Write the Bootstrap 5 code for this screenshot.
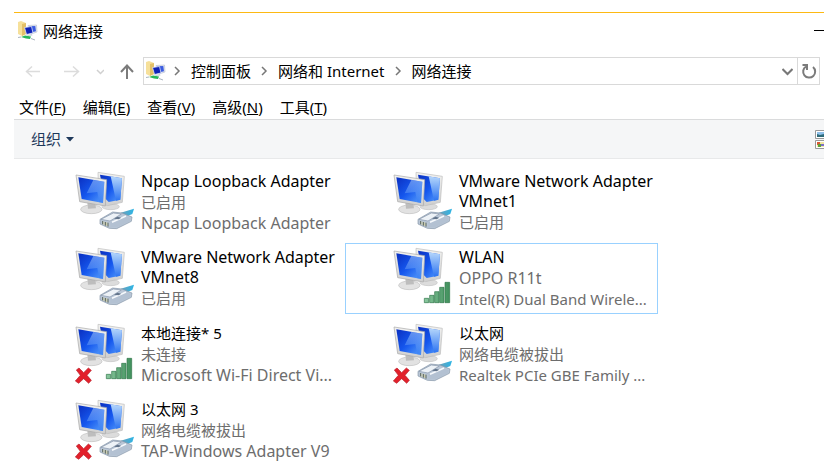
<!DOCTYPE html>
<html lang="zh-CN">
<head>
<meta charset="utf-8">
<meta name="viewport" content="width=device-width, initial-scale=1">
<title>网络连接</title>
<link href="https://cdn.jsdelivr.net/npm/bootstrap@5.3.0/dist/css/bootstrap.min.css" rel="stylesheet">
<style>
body { font-family: "Noto Sans", "Noto Sans CJK SC", sans-serif; font-size: 15px; line-height: 20px; color: #000; background: #fff; overflow: hidden; }
.window { margin: 12px 6px 0 14px; border-top: 1px solid #fdb913; }
.title-bar { height: 36px; padding-left: 4px; gap: 5px; }
.title-bar h1 { font-size: 15px; line-height: 20px; font-weight: 400; }
.plain { border: 0; background: none; padding: 0; color: inherit; line-height: 20px; }
.nav-row { height: 44px; padding: 8px 4px 8px 11px; }
.nav-row .arrows { width: 118px; gap: 16px; }
.address { border: 1px solid #d9d9d9; height: 28px; padding-left: 2px; }
.address .crumbs { gap: 10px; }
.address .crumbs svg, .title-bar svg { overflow: visible; }
.address .refresh { border-left: 1px solid #d9d9d9; width: 22px; }
.menu-row { height: 26px; padding: 4px 5px 2px; gap: 17px; }
.tool-row { height: 40px; background: #f5f6f7; border-top: 1px solid #dadbdc; border-bottom: 1px solid #e8e9ea; padding-left: 17px; color: #1e395b; }
.connections { grid-template-columns: repeat(auto-fill, 313px); column-gap: 5px; row-gap: 5px; padding: 8px 0 0 13px; }
.connection { height: 71px; border: 1px solid transparent; padding: 3px 0 0 47px; gap: 6px; color: #000; }
.connection.selected { border-color: #99d1ff; }
.connection svg { width: 60px; height: 62px; }
.connection .name { line-height: 20px; padding-bottom: 1px; }
.connection .info { line-height: 21px; color: #6d6d6d; }
.connection .latin { font-size: 16px; }
</style>
<script src="https://cdn.jsdelivr.net/npm/bootstrap@5.3.0/dist/js/bootstrap.bundle.min.js"></script>
</head>
<body>
<svg class="position-absolute" width="0" height="0" aria-hidden="true">
  <defs>
    <linearGradient id="screen" x1="0" y1="0" x2="1" y2="1"><stop offset="0" stop-color="#0a2fc0"/><stop offset=".5" stop-color="#1557ee"/><stop offset="1" stop-color="#5aa2fb"/></linearGradient>
    <linearGradient id="glare" x1="0" y1="0" x2="0" y2="1"><stop offset="0" stop-color="#b5d6fb"/><stop offset="1" stop-color="#2c74f2"/></linearGradient>
    <linearGradient id="frame" x1="0" y1="0" x2="0" y2="1"><stop offset="0" stop-color="#f2f2f0"/><stop offset="1" stop-color="#cfcfcf"/></linearGradient>
    <linearGradient id="bar" x1="0" y1="0" x2="1" y2="0"><stop offset="0" stop-color="#8cc9a0"/><stop offset="1" stop-color="#3f8f5b"/></linearGradient>
    <linearGradient id="cable" x1="0" y1="0" x2="1" y2="0"><stop offset="0" stop-color="#6f9fb8"/><stop offset="1" stop-color="#2bb5e6"/></linearGradient>
    <g id="pcs">
      <ellipse cx="122" cy="122" rx="26" ry="9" fill="#dcdcdc" stroke="#c4c4c4" stroke-width="2"/>
      <path d="M84 19 163 31 157 109 112 119 86 106Z" fill="url(#frame)" stroke="#bcbcbc" stroke-width="2"/>
      <path d="M90 26 156 37 151 101 116 108 104 96Z" fill="url(#screen)"/>
      <path d="M122 31 156 37 151 101 138 104Z" fill="url(#glare)"/>
      <ellipse cx="64" cy="130" rx="32" ry="13" fill="#e2e2e2" stroke="#c0c0c0" stroke-width="2"/>
      <path d="M52 108 76 112 78 127 54 128Z" fill="#bdbdbd"/>
      <path d="M18 27 110 41 106 120 29 107Z" fill="url(#frame)" stroke="#a8a8a8" stroke-width="2"/>
      <path d="M25 34 103 47 99 111 35 99Z" fill="url(#screen)"/>
      <path d="M70 42 103 47 99 111 88 109 82 78 50 82Z" fill="url(#glare)" opacity=".5"/>
    </g>
    <g id="plug">
      <path d="M152 140 192 128 187 144 167 152Z" fill="url(#cable)"/>
      <path d="M90 160 128 138 156 141 186 153 184 166 140 188 118 187 90 174Z" fill="#b9c6d6" stroke="#8595a8" stroke-width="2"/>
      <path d="M93 160 130 141 154 144 120 165Z" fill="#edf2f7" stroke="#8796aa" stroke-width="2"/>
      <path d="M121 167 160 149 182 156 181 165 140 184 121 184Z" fill="#b3c1d2"/>
      <path d="M98 165v10M106 168v11M114 170v12" stroke="#5b6659" stroke-width="3"/>
      <path d="M102 167v10M110 169v11" stroke="#d8cf8c" stroke-width="2"/>
      <path d="M126 169 168 150" stroke="#f6f9fc" stroke-width="5"/>
      <path d="M132 158 142 152 154 155 146 160Z" fill="#62748b"/>
    </g>
    <path id="bars" fill="url(#bar)" stroke="#2f7548" stroke-width="2" d="M109 169h13v13h-13zM125 160h13v22h-13zM140 149h13v33h-13zM155 136h13v46h-13zM171 121h14v61h-14z"/>
    <path id="cross" d="M19 156 27 150 41 164 55 150 64 157 51 172 64 187 56 196 41 182 26 196 16 189 31 172Z" fill="#e2202b" stroke="#b8202a" stroke-width="2"/>
    <g id="folder-net">
      <path d="M0 1 3 0 8 2V13L4 15 0 13Z" fill="#f6e09a"/>
      <path d="M4 3 8 2V13L4 15Z" fill="#e3c068"/>
      <path d="M10 4.500 18.500 4 19 11 13 13Z" fill="#e6eaf2" stroke="#b5bccb" stroke-width=".6"/>
      <path d="M11 5.300 17.300 5 18 10.300 13 11.500Z" fill="#3a5be0"/>
      <path d="M6.500 6.500 13.500 5.500 15 12 8.500 13.500Z" fill="#0f22b8" stroke="#dfe6f5" stroke-width=".8"/>
      <path d="M9 14 14 13 14.500 14.500 10 15Z" fill="#c9d0da"/>
      <path d="M3 16 7 14.500 13 15.500 12 18 8 17.500Z" fill="#27b659"/>
      <path d="M13 17.500 17 19M0 16.500 3 16" stroke="#a9b4c0"/>
    </g>
  </defs>
</svg>
<main class="window">
  <header class="title-bar d-flex align-items-center">
    <svg width="20" height="20" viewBox="0 0 20 20" aria-hidden="true"><use href="#folder-net"/></svg>
    <h1 class="m-0 flex-grow-1">网络连接</h1>
    <button class="plain d-flex" aria-label="最小化"><svg width="10" height="10" viewBox="0 0 10 10"><path d="M0 4.500h10" stroke="#000"/></svg></button>
  </header>
  <nav class="nav-row d-flex align-items-center" aria-label="地址栏">
    <div class="arrows d-flex align-items-center flex-shrink-0">
      <button class="plain d-flex" aria-label="后退"><svg width="22" height="18" viewBox="0 0 22 18" fill="none" stroke="#dcdcdc" stroke-width="1.500"><path d="M15 9.500H1M7 4.500 1.500 9.500 7 14.500"/></svg></button>
      <button class="plain d-flex" aria-label="前进"><svg width="17" height="18" viewBox="0 0 17 18" fill="none" stroke="#dcdcdc" stroke-width="1.500"><path d="M1 9.500H15M10 4.500 15.500 9.500 10 14.500"/></svg></button>
      <button class="plain d-flex" aria-label="最近浏览的位置"><svg width="8" height="18" viewBox="0 0 8 18" fill="none" stroke="#d0d0d0" stroke-width="1.500"><path d="M1 8 4.500 11.500 8 8"/></svg></button>
      <button class="plain d-flex" aria-label="上移"><svg width="14" height="18" viewBox="0 0 14 18" fill="none" stroke="#7b7b7b" stroke-width="2"><path d="M7 17V4M1 10 7 3.500 13 10"/></svg></button>
    </div>
    <div class="address d-flex flex-grow-1 align-items-stretch">
      <div class="crumbs d-flex align-items-center flex-grow-1">
        <svg width="18" height="20" viewBox="0 0 18 20" aria-hidden="true"><use href="#folder-net"/></svg>
        <svg width="7" height="10" viewBox="0 0 7 10" fill="none" stroke="#777" stroke-width="1.500" aria-hidden="true"><path d="M1 1 5 5 1 9"/></svg>
        <button class="plain">控制面板</button>
        <svg width="7" height="10" viewBox="0 0 7 10" fill="none" stroke="#777" stroke-width="1.500" aria-hidden="true"><path d="M1 1 5 5 1 9"/></svg>
        <button class="plain">网络和 Internet</button>
        <svg width="7" height="10" viewBox="0 0 7 10" fill="none" stroke="#777" stroke-width="1.500" aria-hidden="true"><path d="M1 1 5 5 1 9"/></svg>
        <button class="plain">网络连接</button>
      </div>
      <button class="plain d-flex align-items-center me-1" aria-label="以前的位置"><svg width="11" height="10" viewBox="0 0 11 10" fill="none" stroke="#777" stroke-width="2"><path d="M.5 3 5.500 8 10.500 3"/></svg></button>
      <button class="plain refresh d-flex align-items-center justify-content-center" aria-label="刷新"><svg width="16" height="16" viewBox="0 0 16 16" fill="none" stroke="#7b7b7b" stroke-width="2"><path d="M12 4A6 6 0 1 1 5 3.500M1.500 2H6v5"/></svg></button>
    </div>
  </nav>
  <nav class="menu-row d-flex align-items-center" aria-label="菜单栏">
    <button class="plain">文件(<u>F</u>)</button>
    <button class="plain">编辑(<u>E</u>)</button>
    <button class="plain">查看(<u>V</u>)</button>
    <button class="plain">高级(<u>N</u>)</button>
    <button class="plain">工具(<u>T</u>)</button>
  </nav>
  <div class="tool-row d-flex align-items-center justify-content-between">
    <button class="plain d-flex align-items-center gap-1">组织<svg width="9" height="5" viewBox="0 0 9 5" aria-hidden="true"><path d="M1 0h8L5 4.500Z" fill="#1e395b"/></svg></button>
    <button class="plain d-flex" aria-label="更改视图"><svg width="9" height="20" viewBox="0 0 9 20"><path d="M10 1.500H.5v8H10M10 11.500H.5v8H10" fill="#fff" stroke="#999"/><path d="M2 3h7v3H2z" fill="#8fc0ea"/><path d="M2 5 5 6 9 5V8H2z" fill="#2f6b78"/><path d="M2 13h7v5H2z" fill="#f0e6a0"/><path d="M2 13h3v3H2z" fill="#d85a35"/><path d="M3 15h3v3H3z" fill="#5ba13c"/><path d="M6 15h3v2H6z" fill="#7b6fc9"/></svg></button>
  </div>
  <section class="connections d-grid" aria-label="网络连接">
    <button class="plain connection d-flex text-start">
      <svg class="flex-shrink-0" viewBox="15 15 180 186" aria-hidden="true"><use href="#pcs"/><use href="#plug"/></svg>
      <span class="d-block flex-grow-1"><span class="name latin d-block">Npcap Loopback Adapter</span><span class="info d-block">已启用</span><span class="info latin d-block text-nowrap">Npcap Loopback Adapter</span></span>
    </button>
    <button class="plain connection d-flex text-start">
      <svg class="flex-shrink-0" viewBox="15 15 180 186" aria-hidden="true"><use href="#pcs"/><use href="#plug"/></svg>
      <span class="d-block flex-grow-1"><span class="name latin d-block">VMware Network Adapter VMnet1</span><span class="info d-block">已启用</span></span>
    </button>
    <button class="plain connection d-flex text-start">
      <svg class="flex-shrink-0" viewBox="15 15 180 186" aria-hidden="true"><use href="#pcs"/><use href="#plug"/></svg>
      <span class="d-block flex-grow-1"><span class="name latin d-block">VMware Network Adapter VMnet8</span><span class="info d-block">已启用</span></span>
    </button>
    <button class="plain connection selected d-flex text-start">
      <svg class="flex-shrink-0" viewBox="15 15 180 186" aria-hidden="true"><use href="#pcs"/><use href="#bars"/></svg>
      <span class="d-block flex-grow-1"><span class="name latin d-block">WLAN</span><span class="info latin d-block">OPPO R11t</span><span class="info d-block text-nowrap">Intel(R) Dual Band Wirele...</span></span>
    </button>
    <button class="plain connection d-flex text-start">
      <svg class="flex-shrink-0" viewBox="15 15 180 186" aria-hidden="true"><use href="#pcs"/><use href="#bars"/><use href="#cross"/></svg>
      <span class="d-block flex-grow-1"><span class="name d-block">本地连接* 5</span><span class="info d-block">未连接</span><span class="info latin d-block text-nowrap">Microsoft Wi-Fi Direct Vi...</span></span>
    </button>
    <button class="plain connection d-flex text-start">
      <svg class="flex-shrink-0" viewBox="15 15 180 186" aria-hidden="true"><use href="#pcs"/><use href="#plug"/><use href="#cross"/></svg>
      <span class="d-block flex-grow-1"><span class="name d-block">以太网</span><span class="info d-block">网络电缆被拔出</span><span class="info d-block text-nowrap">Realtek PCIe GBE Family ...</span></span>
    </button>
    <button class="plain connection d-flex text-start">
      <svg class="flex-shrink-0" viewBox="15 15 180 186" aria-hidden="true"><use href="#pcs"/><use href="#plug"/><use href="#cross"/></svg>
      <span class="d-block flex-grow-1"><span class="name d-block">以太网 3</span><span class="info d-block">网络电缆被拔出</span><span class="info latin d-block text-nowrap">TAP-Windows Adapter V9</span></span>
    </button>
  </section>
</main>
</body>
</html>
